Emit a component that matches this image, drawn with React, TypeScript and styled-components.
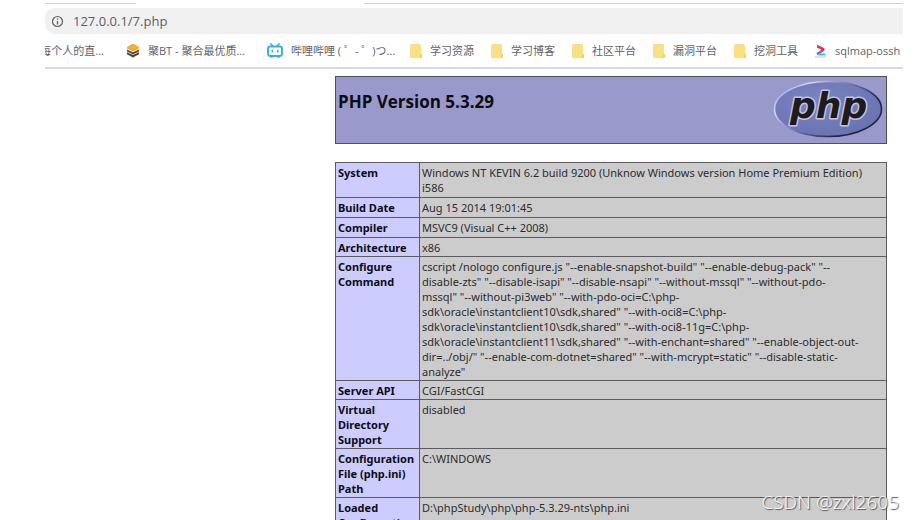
import React from 'react';
import styled, { createGlobalStyle } from 'styled-components';

const GlobalStyle = createGlobalStyle`
  * { box-sizing: border-box; }
  body {
    margin: 0;
    background: #fff;
    font-family: "Open Sans", "Noto Sans CJK SC", sans-serif;
  }
`;

const Page = styled.div`
  position: relative;
  height: 100vh;
  overflow: hidden;
  padding: 3px 11px 0 45px;
`;

const TabEdge = styled.div`
  display: flex;
  justify-content: space-between;
  height: 5px;
`;

const EdgeLine = styled.span<{ $grow?: boolean }>`
  height: 1px;
  background: #cfcfd1;
  flex: ${(p) => (p.$grow ? '1' : '0 0 91px')};
  margin-left: ${(p) => (p.$grow ? '228px' : '0')};
`;

const AddressBar = styled.label`
  display: flex;
  align-items: center;
  gap: 9px;
  height: 26px;
  padding-left: 6px;
  border-radius: 10px 0 0 10px;
  background: #f0f0f1;
`;

const AddressInput = styled.input`
  flex: 1;
  height: 26px;
  padding: 0;
  border: 0;
  outline: 0;
  background: transparent;
  color: #5d5d63;
  font: 13px "Open Sans", sans-serif;
`;

const Bookmarks = styled.nav`
  display: flex;
  align-items: center;
  gap: 16px;
  height: 35px;
  overflow: hidden;
  border-bottom: 2px solid #d8d9da;
`;

const Bookmark = styled.a<{ $width?: number; $clipStart?: boolean }>`
  display: flex;
  flex: none;
  align-items: center;
  justify-content: ${(p) => (p.$clipStart ? 'flex-end' : 'flex-start')};
  gap: 8px;
  width: ${(p) => (p.$width ? `${p.$width}px` : 'auto')};
  margin-right: ${(p) => (p.$clipStart ? '6px' : '0')};
  overflow: ${(p) => (p.$clipStart ? 'hidden' : 'visible')};
  color: #626267;
  font-size: 11px;
  line-height: 16px;
  white-space: nowrap;
  text-decoration: none;
`;

const Icon = styled.svg`
  flex: none;
  display: block;
`;

const Info = styled.main`
  padding: 7px 16px 0 290px;
`;

const Banner = styled.header`
  display: flex;
  justify-content: space-between;
  height: 68px;
  padding: 3px 2px;
  border: 1px solid #50505c;
  background: #9999cc;
`;

const Title = styled.h1`
  margin: 10px 0 0;
  color: #0c0c14;
  font-size: 17px;
  line-height: 24px;
`;

const Table = styled.table`
  width: 100%;
  margin-top: 18px;
  border-collapse: collapse;
  table-layout: fixed;
  color: #2c2c2e;
  font-family: "Noto Sans", sans-serif;
  font-size: 11px;
  line-height: 15px;
`;

const Row = styled.tr<{ $compact?: boolean }>`
  th, td {
    padding: 2px 2px ${(p) => (p.$compact ? 1 : 2)}px;
    border: 1px solid #5c5c60;
    vertical-align: top;
  }
`;

const Key = styled.th`
  width: 84px;
  background: #ccccff;
  color: #0c0c14;
  text-align: left;
`;

const Value = styled.td`
  background: #cccccc;
  white-space: pre;
`;

const Watermark = styled.div`
  position: absolute;
  right: 15px;
  bottom: 4px;
  color: #f4f4f4;
  font-family: "Noto Sans", sans-serif;
  font-size: 19px;
  font-weight: 300;
  line-height: 28px;
  text-shadow: 1px 1px 1px #555;
`;

const InfoIcon = () => (
  <Icon width="13" height="13" viewBox="0 0 13 13" fill="none" stroke="#626266">
    <circle cx="6.5" cy="6.5" r="5" strokeWidth="1.2" />
    <path d="M6.5 6v3.5M6.5 3.5v1.3" strokeWidth="1.3" />
  </Icon>
);

const StackIcon = () => (
  <Icon width="14" height="15" viewBox="0 0 14 15">
    <path d="M1 9.2 7 12l6-2.8v2L7 14.4 1 11.2z" fill="#45454a" />
    <path d="M1 6.4 7 9.2l6-2.8v2L7 11.4 1 8.4z" fill="#55514b" />
    <path d="M1 4 5.5 1.200Q7 .3 8.500 1.200L13 4v1.400L7 8.500 1 5.400z" fill="#f5ad2c" />
  </Icon>
);

const TvIcon = () => (
  <Icon width="16" height="15" viewBox="0 0 16 15" fill="none" stroke="#36b3d6" strokeLinecap="round">
    <rect x="1" y="3.5" width="14" height="9.500" rx="2.200" strokeWidth="1.900" />
    <path d="m4 1 1.800 2M12 1l-1.800 2M5.300 7.500v1.200M10.700 7.500v1.200M4 14h1M11 14h1" strokeWidth="1.700" />
  </Icon>
);

const FolderIcon = () => (
  <Icon width="12" height="14" viewBox="0 0 12 14">
    <path d="M1.500 0h8Q11 0 11 1.500V9l1 1.500V13q0 1-1 1H1.500Q0 14 0 12.500v-11Q0 0 1.500 0z" fill="#fbdf85" />
    <path d="M10 10.500h2V13q0 1-1 1h-1z" fill="#f0cd68" />
  </Icon>
);

const ArrowIcon = () => (
  <Icon width="12" height="14" viewBox="0 0 12 14">
    <path d="M2 .8 8.500 3.800Q10.500 5 9 6.800L7 8.500 4.800 7 6.300 5.600 2 3.800z" fill="#e4335f" />
    <path d="M4.800 7 7 8.500 2.500 11 1.500 9z" fill="#4476cc" />
    <path d="M4 9.600h6.500v1.800H3z" fill="#36c4dc" />
    <path d="M0 12.500h11v1H0z" fill="#e9b4c5" />
  </Icon>
);

const PhpLogo = () => (
  <Icon width="112" height="60" viewBox="0 0 112 60" role="img" aria-label="PHP logo">
    <defs>
      <linearGradient id="rim" x1="0" y1="0" x2="1" y2="0.600">
        <stop offset="0.050" stopColor="#8a8fc5" />
        <stop offset="0.250" stopColor="#d5d9f2" />
        <stop offset="0.500" stopColor="#7a80b8" />
        <stop offset="0.850" stopColor="#232540" />
      </linearGradient>
      <radialGradient id="body" cx="0.400" cy="0.350" r="0.700">
        <stop offset="0" stopColor="#7b83c3" />
        <stop offset="1" stopColor="#6a73b1" />
      </radialGradient>
    </defs>
    <ellipse cx="56" cy="29" rx="53.500" ry="27.500" fill="url(#body)" stroke="url(#rim)" strokeWidth="1.600" />
    <text
      x="18"
      y="38"
      fontFamily="DejaVu Sans, sans-serif"
      fontSize="36"
      fontWeight="700"
      fontStyle="italic"
      fill="#1c1c20"
      stroke="#c4c4dc"
      strokeWidth="3"
      strokeLinejoin="round"
      paintOrder="stroke"
    >
      php
    </text>
  </Icon>
);

const folders = ['学习资源', '学习博客', '社区平台', '漏洞平台', '挖洞工具'];

const configure = [
  'cscript /nologo configure.js "--enable-snapshot-build" "--enable-debug-pack" "--',
  'disable-zts" "--disable-isapi" "--disable-nsapi" "--without-mssql" "--without-pdo-',
  'mssql" "--without-pi3web" "--with-pdo-oci=C:\\php-',
  'sdk\\oracle\\instantclient10\\sdk,shared" "--with-oci8=C:\\php-',
  'sdk\\oracle\\instantclient10\\sdk,shared" "--with-oci8-11g=C:\\php-',
  'sdk\\oracle\\instantclient11\\sdk,shared" "--with-enchant=shared" "--enable-object-out-',
  'dir=../obj/" "--enable-com-dotnet=shared" "--with-mcrypt=static" "--disable-static-',
  'analyze"',
].join('\n');

const rows: { name: string; value: string; compact?: boolean }[] = [
  {
    name: 'System',
    value: 'Windows NT KEVIN 6.2 build 9200 (Unknow Windows version Home Premium Edition)\ni586',
  },
  { name: 'Build Date', value: 'Aug 15 2014 19:01:45' },
  { name: 'Compiler', value: 'MSVC9 (Visual C++ 2008)' },
  { name: 'Architecture', value: 'x86', compact: true },
  { name: 'Configure Command', value: configure, compact: true },
  { name: 'Server API', value: 'CGI/FastCGI', compact: true },
  { name: 'Virtual Directory Support', value: 'disabled', compact: true },
  { name: 'Configuration File (php.ini) Path', value: 'C:\\WINDOWS', compact: true },
  { name: 'Loaded Configuration File', value: 'D:\\phpStudy\\php\\php-5.3.29-nts\\php.ini' },
];

export default function App() {
  return (
    <>
      <GlobalStyle />
      <Page>
        <TabEdge>
          <EdgeLine />
          <EdgeLine $grow />
        </TabEdge>
        <AddressBar>
          <InfoIcon />
          <AddressInput aria-label="Address" defaultValue="127.0.0.1/7.php" />
        </AddressBar>
        <Bookmarks aria-label="Bookmarks">
          <Bookmark href="#" $width={59} $clipStart>每个人的直...</Bookmark>
          <Bookmark href="#" $width={125}><StackIcon />聚BT - 聚合最优质...</Bookmark>
          <Bookmark href="#" $width={127}><TvIcon />哔哩哔哩 ( ゜- ゜)つ...</Bookmark>
          {folders.map((name) => (
            <Bookmark href="#" key={name} $width={65}><FolderIcon />{name}</Bookmark>
          ))}
          <Bookmark href="#"><ArrowIcon />sqlmap-ossh</Bookmark>
        </Bookmarks>
        <Info>
          <Banner>
            <Title>PHP Version 5.3.29</Title>
            <PhpLogo />
          </Banner>
          <Table>
            <tbody>
              {rows.map((row) => (
                <Row key={row.name} $compact={row.compact}>
                  <Key scope="row">{row.name}</Key>
                  <Value>{row.value}</Value>
                </Row>
              ))}
            </tbody>
          </Table>
        </Info>
        <Watermark>CSDN @zxl2605</Watermark>
      </Page>
    </>
  );
}
